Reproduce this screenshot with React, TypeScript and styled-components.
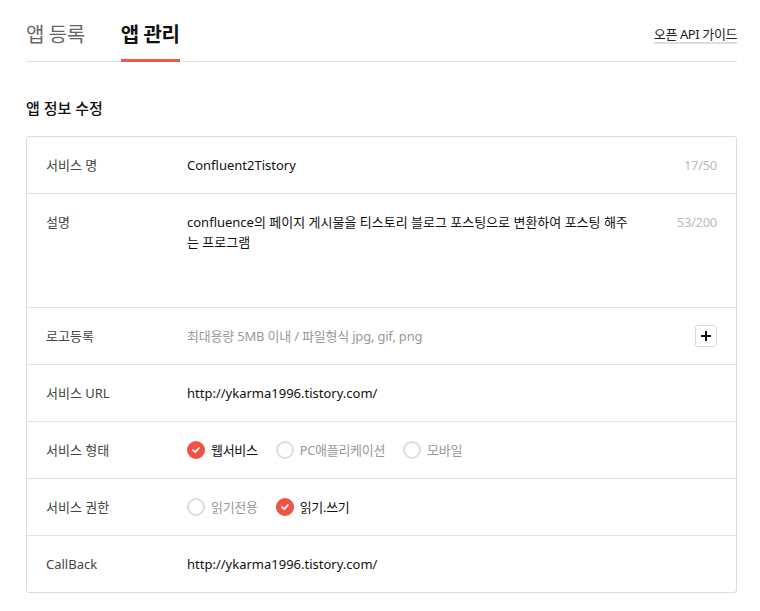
import styled, { createGlobalStyle } from 'styled-components';

const GlobalStyle = createGlobalStyle`
  body {
    margin: 0;
    background: #fff;
    font-family: "Noto Sans", "Noto Sans CJK KR", sans-serif;
    color: #222;
  }
`;

interface RadioOption {
  label: string;
  checked: boolean;
}

interface FormRow {
  label: string;
  kind: 'text' | 'desc' | 'file' | 'radio';
  value?: string;
  counter?: string;
  options?: RadioOption[];
}

const rows: FormRow[] = [
  { label: '서비스 명', kind: 'text', value: 'Confluent2Tistory', counter: '17/50' },
  {
    label: '설명',
    kind: 'desc',
    value: 'confluence의 페이지 게시물을 티스토리 블로그 포스팅으로 변환하여 포스팅 해주는 프로그램',
    counter: '53/200',
  },
  { label: '로고등록', kind: 'file', value: '최대용량 5MB 이내 / 파일형식 jpg, gif, png' },
  { label: '서비스 URL', kind: 'text', value: 'http://ykarma1996.tistory.com/' },
  {
    label: '서비스 형태',
    kind: 'radio',
    options: [
      { label: '웹서비스', checked: true },
      { label: 'PC애플리케이션', checked: false },
      { label: '모바일', checked: false },
    ],
  },
  {
    label: '서비스 권한',
    kind: 'radio',
    options: [
      { label: '읽기전용', checked: false },
      { label: '읽기.쓰기', checked: true },
    ],
  },
  { label: 'CallBack', kind: 'text', value: 'http://ykarma1996.tistory.com/' },
];

function CheckMark() {
  return (
    <svg width="10" height="10" viewBox="0 0 10 10">
      <path d="M2 5.2 L4.2 7.2 L8 3" fill="none" stroke="#fff" strokeWidth="1.8" strokeLinecap="round" strokeLinejoin="round" />
    </svg>
  );
}

function PlusIcon() {
  return (
    <svg width="10" height="10" viewBox="0 0 10 10">
      <path d="M5 0 V10 M0 5 H10" stroke="#111" strokeWidth="2" />
    </svg>
  );
}

function App() {
  return (
    <Page>
      <GlobalStyle />
      <Header>
        <Tabs>
          <Tab>앱 등록</Tab>
          <Tab $active>앱 관리</Tab>
        </Tabs>
        <GuideLink>오픈 API 가이드</GuideLink>
      </Header>

      <SectionTitle>앱 정보 수정</SectionTitle>

      <Table>
        {rows.map((row) => (
          <Row key={row.label} $tall={row.kind === 'desc'}>
            <Label>{row.label}</Label>
            {row.kind === 'radio' ? (
              <RadioGroup>
                {row.options?.map((opt) => (
                  <RadioItem key={opt.label}>
                    <RadioCircle $checked={opt.checked}>
                      {opt.checked && <CheckMark />}
                    </RadioCircle>
                    <RadioLabel $checked={opt.checked}>{opt.label}</RadioLabel>
                  </RadioItem>
                ))}
              </RadioGroup>
            ) : (
              <Value $muted={row.kind === 'file'}>{row.value}</Value>
            )}
            {row.counter && <Counter>{row.counter}</Counter>}
            {row.kind === 'file' && (
              <AddButton type="button">
                <PlusIcon />
              </AddButton>
            )}
          </Row>
        ))}
      </Table>
    </Page>
  );
}

const Page = styled.div`
  width: 711px;
  padding: 0 0 0 26px;
`;

const Header = styled.div`
  display: flex;
  justify-content: space-between;
  align-items: flex-start;
  height: 61px;
  border-bottom: 1px solid #e0e0e0;
`;

const Tabs = styled.div`
  display: flex;
  gap: 36px;
`;

const Tab = styled.div<{ $active?: boolean }>`
  box-sizing: border-box;
  height: 62px;
  padding-top: 21px;
  line-height: 28px;
  font-size: 20px;
  letter-spacing: -0.4px;
  font-weight: ${(p) => (p.$active ? 700 : 400)};
  color: ${(p) => (p.$active ? '#111' : '#666')};
  border-bottom: 3px solid ${(p) => (p.$active ? '#f15545' : 'transparent')};
`;

const GuideLink = styled.a`
  margin-top: 27px;
  font-size: 13px;
  line-height: 15px;
  letter-spacing: -0.4px;
  color: #222;
  border-bottom: 2px solid #dedede;
  cursor: pointer;
`;

const SectionTitle = styled.h2`
  margin: 35px 0 17px;
  font-size: 15px;
  line-height: 22px;
  font-weight: 500;
  color: #111;
`;

const Table = styled.div`
  border: 1px solid #dcdcdc;
  border-radius: 3px;
`;

const Row = styled.div<{ $tall?: boolean }>`
  display: grid;
  grid-template-columns: 141px 448px 1fr auto;
  align-items: ${(p) => (p.$tall ? 'start' : 'center')};
  box-sizing: border-box;
  height: ${(p) => (p.$tall ? '114px' : '57px')};
  padding: ${(p) => (p.$tall ? '18px' : '0')} 19px 0 19px;
  font-size: 13px;
  line-height: 20px;
  & + & {
    border-top: 1px solid #e2e2e2;
  }
  &:first-child {
    height: 56px;
  }
`;

const Label = styled.div`
  color: #444;
`;

const Value = styled.div<{ $muted?: boolean }>`
  color: ${(p) => (p.$muted ? '#999' : '#111')};
  letter-spacing: ${(p) => (p.$muted ? '-0.2px' : '0')};
`;

const Counter = styled.div`
  grid-column: 4;
  color: #bbb;
  text-align: right;
  letter-spacing: -0.3px;
`;

const AddButton = styled.button`
  grid-column: 4;
  display: flex;
  align-items: center;
  justify-content: center;
  width: 22px;
  height: 22px;
  padding: 0;
  border: 1px solid #d8d8d8;
  border-radius: 3px;
  background: #fff;
`;

const RadioGroup = styled.div`
  display: flex;
  gap: 18px;
  grid-column: 2 / 4;
`;

const RadioItem = styled.label`
  display: flex;
  align-items: center;
  gap: 6px;
`;

const RadioCircle = styled.span<{ $checked: boolean }>`
  box-sizing: border-box;
  display: flex;
  align-items: center;
  justify-content: center;
  width: 18px;
  height: 18px;
  border-radius: 50%;
  background: ${(p) => (p.$checked ? '#f25243' : '#fff')};
  border: ${(p) => (p.$checked ? 'none' : '2px solid #ddd')};
`;

const RadioLabel = styled.span<{ $checked: boolean }>`
  color: ${(p) => (p.$checked ? '#111' : '#999')};
  letter-spacing: -0.3px;
`;

export default App;
